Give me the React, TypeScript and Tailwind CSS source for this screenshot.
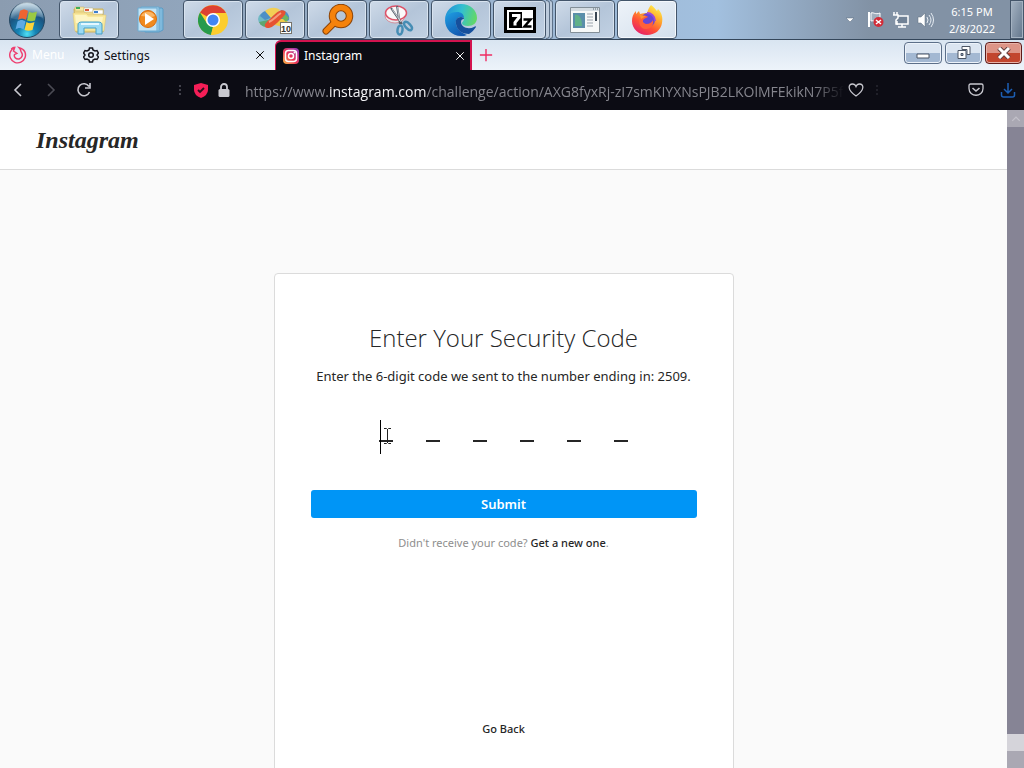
import type { ReactNode } from "react";
import { clsx } from "clsx";

const URL_TAIL = "/challenge/action/AXG8fyxRj-zI7smKIYXNsPJB2LKOlMFEkikN7P5f";

function StartOrb() {
  return (
    <svg width="38" height="38" viewBox="0 0 38 38">
      <defs>
        <radialGradient id="orb" cx="50%" cy="90%" r="85%">
          <stop offset="0" stopColor="#4fe0f5" />
          <stop offset="0.3" stopColor="#1583b4" />
          <stop offset="0.7" stopColor="#1b5480" />
          <stop offset="1" stopColor="#7ea9c4" />
        </radialGradient>
        <linearGradient id="orbShine" x1="0" y1="0" x2="0" y2="1">
          <stop offset="0" stopColor="#fff" stopOpacity="0.6" />
          <stop offset="1" stopColor="#fff" stopOpacity="0.1" />
        </linearGradient>
      </defs>
      <circle cx="19" cy="19" r="17.500" fill="url(#orb)" stroke="#254863" />
      <path d="M3 17a16 16 0 0 1 32 0c-9-5-21 5-32 0Z" fill="url(#orbShine)" />
      <path d="M12 10c3-2 5-2 8 0l-2 9c-3-2-5-2-8 0Z" fill="#ee6431" />
      <path d="M21 10.500c3 2 6 1 8 0l-2 9c-3 1-5 1-8 0Z" fill="#9aca43" />
      <path d="M9.500 20.500c3-2 5-2 8 0l-2 8c-3-2-5-2-8 0Z" fill="#5faae4" />
      <path d="M18.500 21c3 2 5 1 8 0l-2 8c-3 1-5 1-8 0Z" fill="#fcd43a" />
    </svg>
  );
}

function ExplorerIcon() {
  return (
    <svg width="36" height="32" viewBox="0 0 36 32">
      <path d="M3 5h29v23H5Z" fill="#f0dc8e" stroke="#d0b45c" />
      <path d="M4 3h9v4H4Z" fill="#f7e9a5" stroke="#c9ae58" strokeWidth="0.500" />
      <path d="M5 3h4v2H5Z" fill="#3fae55" />
      <path d="M13 4h9v4h-9Z" fill="#fff" stroke="#b9b07a" strokeWidth="0.500" />
      <path d="M14 5h4v2h-4Z" fill="#dd5a3c" />
      <path d="M22 6h10v4H22Z" fill="#fff" stroke="#b9b07a" strokeWidth="0.500" />
      <path d="M23 7h4v2h-4Z" fill="#3c7fd0" />
      <path d="M2 9h13l2 2h18l-2 16H4Z" fill="#f9e99d" stroke="#dcc36c" strokeWidth="0.500" />
      <path d="M4 11h11l2 2h15l-1 6H5Z" fill="#fdf5c4" />
      <path d="M7 30v-9c0-2 1-3 4-3h16c3 0 4 1 4 3v9h-6v-6H13v6Z" fill="#9bdaf3" stroke="#469fc6" />
      <path d="M10 20h18" stroke="#e4f8ff" strokeWidth="2" />
    </svg>
  );
}

function MediaPlayerIcon() {
  return (
    <svg width="28" height="28" viewBox="0 0 28 28">
      <path d="M7 2h18l1 1v21l-4 2H8Z" fill="#7fb9dc" stroke="#5b9bc4" />
      <path d="M4 1h18v24H4Z" fill="#a8d3ec" stroke="#68a8cf" />
      <path d="M1 2h19v23H1Z" fill="#c3e3f4" stroke="#6cabd1" />
      <circle cx="11" cy="13" r="8.500" fill="#f08a1d" stroke="#d96b0c" />
      <path d="M4 10a8 8 0 0 1 14 0c-4 2-9 0-14 0Z" fill="#fbb664" />
      <path d="m8 7 9 6-9 6Z" fill="#fff" />
    </svg>
  );
}

function ChromeIcon() {
  return (
    <svg width="30" height="30" viewBox="0 0 30 30">
      <circle cx="15" cy="15" r="15" fill="#fccd2d" />
      <path d="M15 15 2 7.500A15 15 0 0 1 28 8H15Z" fill="#dd4132" />
      <path d="M2 7.500 9 18.500l6 3.500-2 8A15 15 0 0 1 2 7.500Z" fill="#279a4b" />
      <path d="m15 22-2 8h2l6-10Z" fill="#fccd2d" />
      <circle cx="15" cy="15" r="7" fill="#fff" />
      <circle cx="15" cy="15" r="5.500" fill="#4285f4" />
    </svg>
  );
}

function SketchIcon() {
  return (
    <svg width="38" height="32" viewBox="0 0 38 32">
      <ellipse cx="11" cy="15" rx="9" ry="7" fill="#6fb9c4" />
      <path d="M3 18c2 5 7 6 12 4l-3-6Z" fill="#5fa66f" />
      <path d="M4 12c2-5 6-6 10-5l3 6-8 3Z" fill="#4d8fc6" />
      <path d="M9 7c5-4 11-4 15-1l-9 8Z" fill="#f2cf55" />
      <path d="M25 6c6 1 9 5 8 10l-5 3-6-5Z" fill="#4d8fc6" />
      <path d="M20 15h9l3 3-5 5-8-2Z" fill="#f0c94a" />
      <path d="M28 9l5 5-3 4-4-4Z" fill="#71b45d" />
      <path d="M9 22c-1-2 3-5 7-9 5-5 9-8 13-6 2 2-1 5-4 8-5 5-8 8-12 9-2 0-4 0-4-2Z" fill="#e65232" />
      <path d="M13 18c5-2 7-6 12-9" fill="none" stroke="#f49a7d" strokeWidth="2" />
      <rect x="24.500" y="18.500" width="11" height="11" fill="#fff" stroke="#77736a" />
      <text x="25" y="28" fontFamily="Liberation Sans" fontSize="9" fontWeight="bold" fill="#333">10</text>
    </svg>
  );
}

function MagnifierIcon() {
  return (
    <svg width="34" height="32" viewBox="0 0 34 32">
      <path d="m15 18-9 9" stroke="#8a4308" strokeWidth="7" strokeLinecap="round" />
      <circle cx="21" cy="12" r="8.500" fill="none" stroke="#8a4308" strokeWidth="7.500" />
      <path d="m15 18-9 9" stroke="#f5820b" strokeWidth="5" strokeLinecap="round" />
      <circle cx="21" cy="12" r="8.500" fill="none" stroke="#f5820b" strokeWidth="5.500" />
    </svg>
  );
}

function SnippingIcon() {
  return (
    <svg width="32" height="32" viewBox="0 0 32 32">
      <ellipse cx="12" cy="12" rx="10" ry="7" fill="#e8e8ec" stroke="#d3929e" />
      <ellipse cx="13" cy="9" rx="10.500" ry="7" fill="#fafafa" stroke="#dd5369" strokeWidth="1.500" />
      <path d="m8 4 11 16M14 2l3 18" stroke="#59616c" strokeWidth="2" />
      <path d="m9 5 9 13M14.500 3l2 14" stroke="#dfe4e9" strokeWidth="0.800" />
      <ellipse cx="17" cy="26" rx="2.500" ry="4.500" fill="none" stroke="#468db4" strokeWidth="2.500" transform="rotate(8 17 26)" />
      <ellipse cx="25" cy="22" rx="2.500" ry="5" fill="none" stroke="#468db4" strokeWidth="2.500" transform="rotate(-42 25 22)" />
    </svg>
  );
}

function EdgeIcon() {
  return (
    <svg width="34" height="34" viewBox="0 0 34 34">
      <defs>
        <linearGradient id="edgeTop" x1="0" y1="0.3" x2="1" y2="0.5">
          <stop offset="0" stopColor="#2091d9" />
          <stop offset="0.5" stopColor="#33bfd0" />
          <stop offset="1" stopColor="#63d866" />
        </linearGradient>
        <linearGradient id="edgeLow" x1="0" y1="0" x2="0.6" y2="1">
          <stop offset="0" stopColor="#1ea0e4" />
          <stop offset="1" stopColor="#1358b0" />
        </linearGradient>
      </defs>
      <path d="M1 17C1 8 8 1 17 1s16 6 16 14c0 5-4 8-9 8-4 0-6-1-6-3 0-1 2-2 2-4 0-3-3-5-7-5-6 0-11 3-12 6Z" fill="url(#edgeTop)" />
      <path d="M1 17c1-5 6-8 12-8 4 0 7 2 7 6-5-3-9 1-8 6 1 6 6 9 11 11-2 1-4 1-6 1C8 33 1 26 1 17Z" fill="url(#edgeLow)" />
      <path d="M17 14c-4 0-6 3-5 7 1 7 7 10 13 10 3-2 5-4 7-7 0-1-1-1-2 0-6 3-13 0-13-5 0-2 1-3 3-3 0-1-1-2-3-2Z" fill="#164f9c" />
    </svg>
  );
}

function SevenZipIcon() {
  return (
    <svg width="32" height="26" viewBox="0 0 32 26">
      <rect x="1.500" y="1.500" width="29" height="23" fill="#fff" stroke="#000" strokeWidth="3" />
      <path d="M5 5h13v16H5Z" fill="#000" />
      <path d="M8 8.500h7v2l-4 5v3" fill="none" stroke="#fff" strokeWidth="3" />
      <path d="M19.500 12.500h7l-6 7h7" fill="none" stroke="#000" strokeWidth="2.500" />
    </svg>
  );
}

function WindowIcon() {
  return (
    <svg width="30" height="26" viewBox="0 0 30 26">
      <path d="M.5.5h29v25H.5Z" fill="#f6f8f8" stroke="#838f98" />
      <path d="M1 1h28v3H1Z" fill="#d4dce2" />
      <path d="M23 2h1m1 0h1m1 0h1" stroke="#536472" />
      <path d="M3 6h12v15H3Z" fill="#5a8eaa" />
      <path d="M5 8c4-1 7 3 7 11H5Z" fill="#60b089" />
      <path d="M17 7h6m-6 3h6m-6 3h6m-6 3h6m-6 3h6" stroke="#9ba4ad" />
      <path d="M26 5v9" stroke="#394653" strokeWidth="2" />
    </svg>
  );
}

function FirefoxIcon() {
  return (
    <svg width="32" height="32" viewBox="0 0 32 32">
      <defs>
        <linearGradient id="fox" x1="0.8" y1="0" x2="0.2" y2="1">
          <stop offset="0" stopColor="#fff34f" />
          <stop offset="0.35" stopColor="#ffa62b" />
          <stop offset="0.65" stopColor="#ff5036" />
          <stop offset="1" stopColor="#e11b70" />
        </linearGradient>
      </defs>
      <path d="M20 1c3 2 4 4 6 6l1-2c4 4 5 9 4 14-1 7-7 12-15 12C8 31 1 25 1 17c0-4 1-7 4-10v3l3-3 1 3c3-1 5-1 7-1 1-3 2-6 4-8Z" fill="url(#fox)" />
      <circle cx="17" cy="16" r="7" fill="#6547d5" />
      <path d="M9 13c2-2 6-2 8 0l-4 2c-2 2-1 4 2 5 4 0 6-2 7-4 1 5-2 9-7 9-6 0-8-6-6-12Z" fill="#ff6138" />
      <path d="M16 9c4 0 8 3 8 8" fill="none" stroke="#9a48dc" strokeWidth="2" />
      <path d="M8 9c1 2 3 3 7 3l-5 3Z" fill="#ff972f" />
    </svg>
  );
}

function InstagramGlyph() {
  return (
    <svg width="16" height="16" viewBox="0 0 16 16">
      <defs>
        <linearGradient id="insta" x1="0" y1="1" x2="1" y2="0">
          <stop offset="0" stopColor="#fdbd45" />
          <stop offset="0.45" stopColor="#ed3657" />
          <stop offset="1" stopColor="#8a3bc8" />
        </linearGradient>
      </defs>
      <rect width="16" height="16" rx="4" fill="url(#insta)" />
      <rect x="2.500" y="2.500" width="11" height="11" rx="3" fill="none" stroke="#fff" strokeWidth="1.500" />
      <circle cx="8" cy="8" r="2.500" fill="none" stroke="#fff" strokeWidth="1.500" />
      <circle cx="11.500" cy="4.500" r="1" fill="#fff" />
    </svg>
  );
}

type LineIconProps = {
  children: ReactNode;
  size?: number;
  className?: string;
};

function LineIcon({ children, size = 16, className }: LineIconProps) {
  return (
    <svg
      width={size}
      height={size}
      viewBox="0 0 16 16"
      fill="none"
      stroke="currentColor"
      strokeWidth="1.3"
      className={clsx("shrink-0", className)}
    >
      {children}
    </svg>
  );
}

function CloseIcon() {
  return (
    <LineIcon size={12}>
      <path d="m3 3 10 10M13 3 3 13" />
    </LineIcon>
  );
}

type TaskItem = {
  name: string;
  icon: ReactNode;
  kind: "running" | "pinned" | "stacked" | "active";
};

const taskItems: TaskItem[] = [
  { name: "Windows Explorer", icon: <ExplorerIcon />, kind: "running" },
  { name: "Windows Media Player", icon: <MediaPlayerIcon />, kind: "pinned" },
  { name: "Google Chrome", icon: <ChromeIcon />, kind: "running" },
  { name: "Screen tools", icon: <SketchIcon />, kind: "running" },
  { name: "Search", icon: <MagnifierIcon />, kind: "running" },
  { name: "Snipping Tool", icon: <SnippingIcon />, kind: "running" },
  { name: "Microsoft Edge", icon: <EdgeIcon />, kind: "running" },
  { name: "7-Zip", icon: <SevenZipIcon />, kind: "stacked" },
  { name: "Program window", icon: <WindowIcon />, kind: "running" },
  { name: "Firefox", icon: <FirefoxIcon />, kind: "active" },
];

const taskFace =
  "flex h-full items-center justify-center rounded-sm border border-[#43556a] bg-linear-to-br from-[#cfdbe9] via-[#b4c5d9] to-[#c1d1e3] shadow-[inset_0_0_0_1px_#d8e3ef]";

function TaskButton({ name, icon, kind }: TaskItem) {
  if (kind === "stacked") {
    return (
      <button aria-label={name} className="flex h-full w-[60px]">
        <span className={clsx(taskFace, "w-[53px]")}>{icon}</span>
        <span className="h-full w-1 rounded-r-sm border border-l-0 border-[#5d7188] bg-[#bccbdc]" />
        <span className="h-full w-[3px] rounded-r-sm border border-l-0 border-[#5d7188] bg-[#bccbdc]" />
      </button>
    );
  }
  return (
    <button
      aria-label={name}
      className={clsx(
        "w-[60px]",
        kind === "pinned" && "flex h-full items-center justify-center",
        kind === "running" && taskFace,
        kind === "active" &&
          "flex h-full items-center justify-center rounded-sm border border-[#43556a] bg-linear-to-br from-[#eef3f9] to-[#d2dfec] shadow-[inset_0_0_0_1px_#f4f8fc]",
      )}
    >
      {icon}
    </button>
  );
}

function Taskbar() {
  return (
    <header className="flex h-10 shrink-0 border-b border-[#34465a] bg-linear-to-r from-[#8b9cb0] via-[#a2c0df] via-70% to-[#8292a5] to-85%">
      <button aria-label="Start" className="flex w-[59px] items-center pl-2">
        <StartOrb />
      </button>
      <nav aria-label="Taskbar" className="flex gap-0.5">
        {taskItems.map((item) => (
          <TaskButton key={item.name} {...item} />
        ))}
      </nav>
      <div className="ml-auto flex items-center text-white">
        <button aria-label="Show hidden icons" className="mr-3">
          <svg width="10" height="6" viewBox="0 0 10 6">
            <path d="M1 1h8L5 5Z" fill="#fff" stroke="#57687c" strokeWidth="0.5" />
          </svg>
        </button>
        <div className="flex items-center gap-2">
          <svg width="17" height="17" viewBox="0 0 17 17">
            <path d="M2 1v15" stroke="#fff" strokeWidth="2" />
            <path d="M4 2c3-1 4 2 9 0v8c-4 2-6-1-9 0Z" fill="#a1afbe" stroke="#fff" />
            <circle cx="11.500" cy="11" r="5" fill="#d22c38" />
            <path d="m9 9 5 4m0-4-5 4" stroke="#fff" strokeWidth="1.5" />
          </svg>
          <svg width="17" height="16" viewBox="0 0 17 16">
            <path d="M6 4h10v8H5V9" fill="#718296" stroke="#fff" strokeWidth="1.500" />
            <path d="M10 12v3M6 15h8M2 0v3m3-3v3M1 3h5v3L4 8v4h2" fill="none" stroke="#fff" strokeWidth="1.500" />
          </svg>
          <svg width="17" height="16" viewBox="0 0 17 16">
            <path d="M1 5h3l4-4v14l-4-4H1Z" fill="#fff" stroke="#5c6c7e" strokeWidth="0.5" />
            <path d="M10 5q2 3 0 6M12 3q4 5 0 10M14 1q5 7 0 14" fill="none" stroke="#e7edf3" />
          </svg>
        </div>
        <time className="w-[76px] text-center text-[11px]/[17px]">
          6:15 PM
          <br />
          2/8/2022
        </time>
        <button
          aria-label="Show desktop"
          className="h-full w-[14px] border border-[#45566a] bg-linear-to-br from-[#a6b4c3] to-[#63768c] shadow-[inset_0_0_0_1px_#a4b2c1]"
        />
      </div>
    </header>
  );
}

function WindowControls() {
  const face =
    "flex h-[22px] items-center justify-center rounded-sm border border-[#5c6f89] bg-linear-to-b from-[#dbe5f1] from-50% to-[#a3b8d2] to-50% shadow-[inset_0_0_0_1px_#edf3fa]";
  return (
    <div className="ml-auto flex gap-[3px] pt-0.5 pr-0.5">
      <button aria-label="Minimize" className={clsx(face, "w-[38px]")}>
        <svg width="14" height="14" viewBox="0 0 14 14">
          <path d="M1 8h12v4H1Z" fill="#fff" stroke="#4b5564" />
        </svg>
      </button>
      <button aria-label="Restore" className={clsx(face, "w-[37px]")}>
        <svg width="16" height="16" viewBox="0 0 16 16">
          <path d="M6 1.500h8v8h-3v-5H6Z" fill="#fff" stroke="#4b5564" />
          <path d="M2 5.500h8v8H2Z" fill="#fff" stroke="#4b5564" />
          <path d="M5 8.500h2v2H5Z" fill="#9aaec7" stroke="#4b5564" />
        </svg>
      </button>
      <button
        aria-label="Close"
        className="flex h-[22px] w-[37px] items-center justify-center rounded-sm border border-[#5e1c1b] bg-linear-to-b from-[#dd9487] from-50% to-[#c2452e] to-50% shadow-[inset_0_0_0_1px_#e8b2a8]"
      >
        <svg width="14" height="12" viewBox="0 0 14 12">
          <path d="m2 1 10 10m0-10L2 11" stroke="#654343" strokeWidth="5" />
          <path d="m2 1 10 10m0-10L2 11" stroke="#fff" strokeWidth="3" />
        </svg>
      </button>
    </div>
  );
}

function TabStrip() {
  return (
    <div className="flex h-[30px] shrink-0 bg-linear-to-b from-[#d9e5f1] to-[#edf3fa] text-xs">
      <button className="flex w-[75px] items-center gap-[5px] pl-[9px] text-white">
        <LineIcon size={18} className="text-[#ee3f70]">
          <path d="M5 1.500A7 7 0 1 0 14 5c-1-2-3-3-5-3.500 2 2 1 3 2 4 1.500 2 1 5-2 6-3 .5-5-2-4-4l2-1-3-2Z" />
          <path d="M2 3c1-1 1-2 3-2" />
        </LineIcon>
        Menu
      </button>
      <div className="flex w-[200px] items-center pr-[9px] pl-2">
        <svg width="16" height="16" viewBox="0 0 16 16" fill="none" stroke="#15151d" strokeWidth="1.500">
          <path d="M6.500 1h3l.5 2 2 1 2-.5L15.500 6 14 8l1.500 2-1.500 2.500-2-.5-2 1-.5 2h-3L6 13l-2-1-2 .5L.5 10 2 8 .5 6 2 3.500 4 4l2-1Z" />
          <circle cx="8" cy="8" r="2.300" />
        </svg>
        <span className="ml-[5px] flex-1 pt-0.5 text-[#101018]">Settings</span>
        <button aria-label="Close Settings">
          <CloseIcon />
        </button>
      </div>
      <div className="flex w-[197px] items-center rounded-tl-md border-t-2 border-r-2 border-l border-[#d3134f] bg-[#0c0c14] pr-1 pl-[7px] text-white">
        <InstagramGlyph />
        <span className="ml-[5px] flex-1">Instagram</span>
        <button aria-label="Close Instagram">
          <CloseIcon />
        </button>
      </div>
      <button aria-label="New tab" className="flex w-7 items-center justify-center text-[#ef2c62]">
        <LineIcon size={14}>
          <path d="M8 1v14M1 8h14" strokeWidth="1.600" />
        </LineIcon>
      </button>
      <WindowControls />
    </div>
  );
}

function Toolbar() {
  return (
    <div className="flex h-10 shrink-0 items-center bg-[#0c0c14] pr-2 pl-2.5 text-[#c9c9d0]">
      <div className="flex items-center gap-[17px]">
        <button aria-label="Back">
          <LineIcon>
            <path d="M11 2 5 8l6 6" strokeWidth="1.600" />
          </LineIcon>
        </button>
        <button aria-label="Forward" className="text-[#4b4b54]">
          <LineIcon>
            <path d="m5 2 6 6-6 6" strokeWidth="1.600" />
          </LineIcon>
        </button>
        <button aria-label="Reload">
          <LineIcon>
            <path d="M13.500 10A6 6 0 1 1 13 4.500M14 1v5H9" strokeWidth="1.600" />
          </LineIcon>
        </button>
      </div>
      <svg width="4" height="12" viewBox="0 0 4 12" className="ml-[86px] shrink-0">
        <path d="M2 1v2m0 2v2m0 2v2" stroke="#54545e" strokeWidth="1.500" />
      </svg>
      <svg width="14" height="15" viewBox="0 0 14 15" className="ml-3 shrink-0">
        <path d="M7 0 14 2v5q0 5-7 8-7-3-7-8V2Z" fill="#f51e57" />
        <path d="m4 7 2 2 4-4" fill="none" stroke="#27101a" strokeWidth="1.800" />
      </svg>
      <svg width="12" height="15" viewBox="0 0 12 15" className="ml-2.5 shrink-0">
        <path d="M3 7V4a3 3 0 0 1 6 0v3" fill="none" stroke="#c9c9d0" strokeWidth="1.800" />
        <rect x="0.500" y="6" width="11" height="8" rx="1.500" fill="#c9c9d0" />
      </svg>
      <div
        role="textbox"
        aria-label="Address"
        className="ml-[15px] shrink-0 whitespace-nowrap mask-r-from-95% pt-1 font-['Open_Sans',sans-serif] text-sm/6 text-[#85858d]"
      >
        https://www.<span className="font-medium text-[#f4f4f7]">instagram.com</span>
        {URL_TAIL}
      </div>
      <button aria-label="Bookmark" className="ml-1">
        <LineIcon>
          <path d="M8 14C-1 8 0 2 4.500 2 7 2 8 4.500 8 4.500S9 2 11.500 2C16 2 17 8 8 14Z" />
        </LineIcon>
      </button>
      <svg width="4" height="12" viewBox="0 0 4 12" className="ml-3">
        <path d="M1 1v2m0 2v2m0 2v2" stroke="#34343e" />
      </svg>
      <div className="ml-auto flex gap-4">
        <button aria-label="Save to Pocket">
          <LineIcon>
            <path d="M2.500 2h11q1.500 0 1.500 1.500v3c0 9-14 9-14 0v-3Q1 2 2.500 2Z" />
            <path d="m4.500 6 3.500 3 3.500-3" strokeWidth="1.600" />
          </LineIcon>
        </button>
        <button aria-label="Downloads" className="text-[#1c5fb5]">
          <LineIcon>
            <path d="M8 1v9M4 7l4 4 4-4M1.500 10v3q0 2 2 2h9q2 0 2-2v-3" strokeWidth="1.500" />
          </LineIcon>
        </button>
      </div>
    </div>
  );
}

function CodeInputs() {
  return (
    <fieldset aria-label="Security code" className="relative mx-auto mt-8 flex w-[250px] justify-between">
      {[1, 2, 3, 4, 5, 6].map((digit) => (
        <input
          key={digit}
          aria-label={`Digit ${digit}`}
          maxLength={1}
          inputMode="numeric"
          className="h-6 w-3.5 border-b-2 border-[#262626] bg-transparent text-center outline-none"
        />
      ))}
      <span className="absolute top-0.5 left-px h-[34px] w-px bg-black" />
      <svg width="9" height="16" viewBox="0 0 9 16" className="absolute top-2.5 left-1">
        <path d="M1 .5h2.500l1 1 1-1H8M4.500 1v14M1 15.500h2.500l1-1 1 1H8" fill="none" stroke="#222" />
      </svg>
    </fieldset>
  );
}

function ChallengeCard() {
  return (
    <form className="mx-auto mt-[103px] flex h-[560px] w-[460px] shrink-0 flex-col rounded-sm border border-[#dbdbdb] bg-white px-9 text-center text-[#262626]">
      <h1 className="mt-12 font-['Open_Sans',sans-serif] text-2xl/8 font-light">Enter Your Security Code</h1>
      <p className="mt-3 text-[13px]/5 whitespace-nowrap">
        Enter the 6-digit code we sent to the number ending in: 2509.
      </p>
      <CodeInputs />
      <button type="button" className="mt-12 h-7 rounded-[3px] bg-[#0095f6] pt-0.5 text-[13px] font-semibold text-white">
        Submit
      </button>
      <p className="mt-4 text-[11px]/[18px] text-[#8e8e8e]">
        Didn't receive your code?{" "}
        <a href="#resend" className="font-medium text-[#262626]">
          Get a new one
        </a>
        .
      </p>
      <button type="button" className="mx-auto mt-[168px] text-[11px]/[18px] font-medium">
        Go Back
      </button>
    </form>
  );
}

function Scrollbar() {
  return (
    <div aria-hidden="true" className="flex w-[17px] shrink-0 flex-col bg-[#d5d4da]">
      <div className="flex h-[17px] items-center justify-center bg-[#aaa8b3] text-[#c3c1ca]">
        <LineIcon size={10}>
          <path d="m2 11 6-6 6 6" strokeWidth="2" />
        </LineIcon>
      </div>
      <div className="flex-1 bg-[#868495]" />
      <div className="h-[17px]" />
      <div className="h-[17px] bg-[#aaa8b3]" />
    </div>
  );
}

export default function App() {
  return (
    <div className="flex h-screen flex-col overflow-hidden font-['Noto_Sans','Open_Sans',sans-serif]">
      <Taskbar />
      <TabStrip />
      <Toolbar />
      <div className="flex min-h-0 flex-1">
        <main className="flex min-w-0 flex-1 flex-col overflow-hidden bg-[#fafafa]">
          <div className="flex h-[60px] shrink-0 items-center border-b border-[#dbdbdb] bg-white pl-9">
            <a
              href="#home"
              className="font-['Liberation_Serif',serif] text-2xl/8 font-bold text-[#262626] italic"
            >
              Instagram
            </a>
          </div>
          <ChallengeCard />
        </main>
        <Scrollbar />
      </div>
    </div>
  );
}
